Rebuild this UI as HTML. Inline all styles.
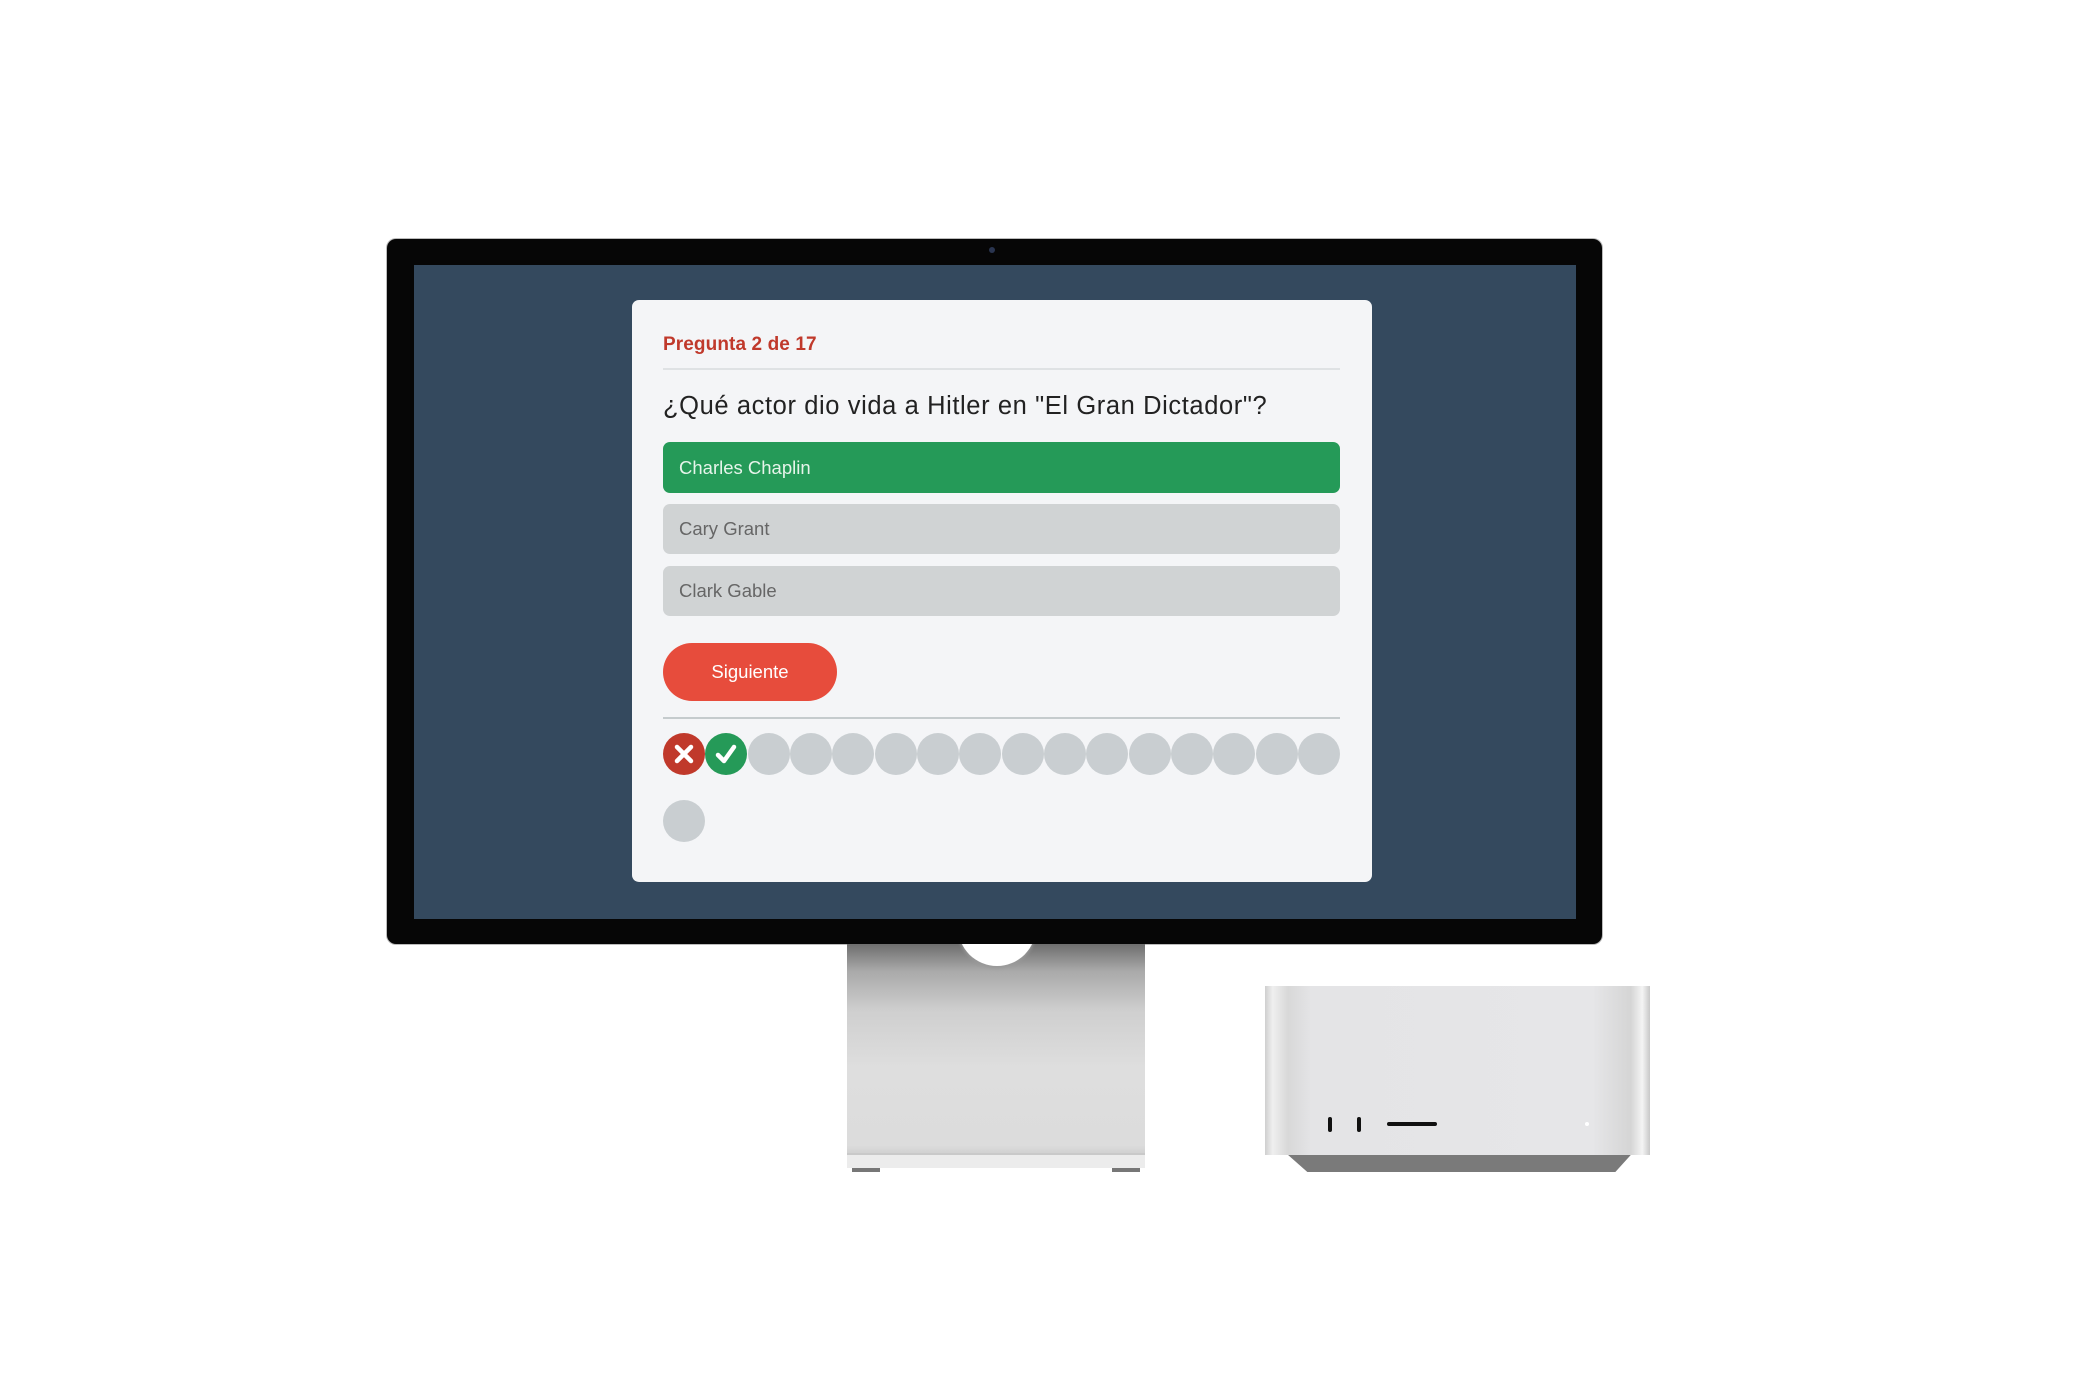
<!DOCTYPE html>
<html><head><meta charset="utf-8"><style>
*{margin:0;padding:0;box-sizing:border-box}
body{width:2100px;height:1400px;background:#fff;position:relative;overflow:hidden;font-family:"Liberation Sans",sans-serif}
.abs{position:absolute}
#mon{left:387px;top:239px;width:1215px;height:705px;background:#060606;border-radius:9px;box-shadow:0 0 0 1px #bbb}
#scr{left:414px;top:265px;width:1162px;height:654px;background:#34495e}
#card{left:632px;top:300px;width:740px;height:582px;background:#f4f5f7;border-radius:7px}
.t{position:absolute;left:663px;white-space:nowrap}
.line{position:absolute;left:663px;width:677px;height:2px;background:#dfe2e4}
.opt{position:absolute;left:663px;width:677px;border-radius:7px;font-size:18.5px;padding-left:16px;display:flex;align-items:center}
.dot{position:absolute;width:42px;height:42px;border-radius:50%;background:#c9ced1}
</style></head><body>
<div id="mon" class="abs"></div>
<div class="abs" style="left:989px;top:247px;width:6px;height:6px;border-radius:50%;background:#2a3550"></div>
<div id="scr" class="abs"></div>
<div id="card" class="abs"></div>
<div class="t" style="top:334px;font-size:19px;font-weight:bold;color:#c0392b;letter-spacing:0.1px">Pregunta 2 de 17</div>
<div class="line" style="top:368px"></div>
<div class="t" style="top:392px;font-size:25.5px;color:#222;letter-spacing:0.6px">¿Qué actor dio vida a Hitler en "El Gran Dictador"?</div>
<div class="opt" style="top:442px;height:51px;background:#259a58;color:#e6f4ea">Charles Chaplin</div>
<div class="opt" style="top:504px;height:50px;background:#d0d3d4;color:#666">Cary Grant</div>
<div class="opt" style="top:566px;height:50px;background:#d0d3d4;color:#666">Clark Gable</div>
<div class="abs" style="left:663px;top:643px;width:174px;height:58px;border-radius:29px;background:#e74c3c;color:#fff;font-size:18.5px;display:flex;align-items:center;justify-content:center">Siguiente</div>
<div class="line" style="top:717px;height:1.5px;background:#c5cbcd"></div>
<div class="dot" style="left:663px;top:733px;background:#c0392b"></div>
<svg class="abs" style="left:663px;top:733px" width="42" height="42"><path d="M14 14L28 28M28 14L14 28" stroke="#fff" stroke-width="4.5" stroke-linecap="round"/></svg>
<div class="dot" style="left:705px;top:733px;background:#259a58"></div>
<svg class="abs" style="left:705px;top:733px" width="42" height="42"><path d="M13 22L19 28L29 14" stroke="#fff" stroke-width="4.5" fill="none" stroke-linecap="round" stroke-linejoin="round"/></svg>
<div class="dot" style="left:748px;top:733px"></div>
<div class="dot" style="left:790px;top:733px"></div>
<div class="dot" style="left:832px;top:733px"></div>
<div class="dot" style="left:875px;top:733px"></div>
<div class="dot" style="left:917px;top:733px"></div>
<div class="dot" style="left:959px;top:733px"></div>
<div class="dot" style="left:1002px;top:733px"></div>
<div class="dot" style="left:1044px;top:733px"></div>
<div class="dot" style="left:1086px;top:733px"></div>
<div class="dot" style="left:1129px;top:733px"></div>
<div class="dot" style="left:1171px;top:733px"></div>
<div class="dot" style="left:1213px;top:733px"></div>
<div class="dot" style="left:1256px;top:733px"></div>
<div class="dot" style="left:1298px;top:733px"></div>
<div class="dot" style="left:663px;top:800px"></div>
<!-- stand -->
<div class="abs" style="left:847px;top:944px;width:298px;height:224px;background:linear-gradient(#6e6e6e 0%,#a9a9a9 12%,#cfcfcf 30%,#dedede 55%,#dcdcdc 90%,#c8c8c8 96%,#e8e8e8 97%)"></div>
<div class="abs" style="left:847px;top:1153px;width:298px;height:15px;background:#ececec;border-top:2px solid #c9c9c9"></div>
<div class="abs" style="left:852px;top:1168px;width:28px;height:4px;background:#777"></div>
<div class="abs" style="left:1112px;top:1168px;width:28px;height:4px;background:#777"></div>
<div class="abs" style="left:958px;top:926px;width:78px;height:40px;border-radius:0 0 40px 40px;background:#fff;box-shadow:0 2px 3px #999"></div>
<div class="abs" style="left:940px;top:920px;width:120px;height:24px;background:#060606"></div>
<!-- mac studio -->
<div class="abs" style="left:1265px;top:986px;width:385px;height:169px;background:linear-gradient(90deg,#cfcfcf 0%,#efefef 2%,#d8d8d8 6%,#e4e4e6 12%,#e6e6e8 85%,#d5d5d5 95%,#f4f4f4 98%,#c8c8c8 100%)"></div>
<div class="abs" style="left:1265px;top:1155px;width:385px;height:17px;background:#7a7a7a;clip-path:polygon(6% 0,95% 0,91% 100%,11% 100%)"></div>
<div class="abs" style="left:1328px;top:1117px;width:4px;height:15px;border-radius:2px;background:#111"></div>
<div class="abs" style="left:1357px;top:1117px;width:4px;height:15px;border-radius:2px;background:#111"></div>
<div class="abs" style="left:1387px;top:1122px;width:50px;height:4px;border-radius:2px;background:#111"></div>
<div class="abs" style="left:1585px;top:1122px;width:4px;height:4px;border-radius:50%;background:#fff"></div>
</body></html>
